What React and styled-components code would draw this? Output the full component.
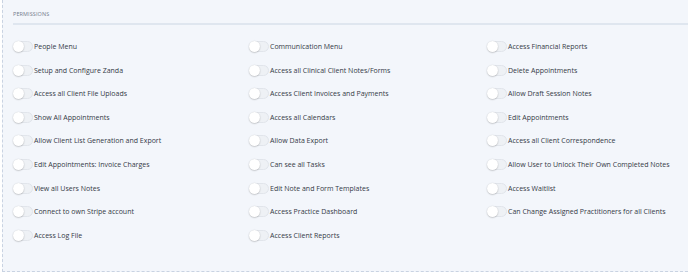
import React from "react";
import styled, { createGlobalStyle } from "styled-components";

const GlobalStyle = createGlobalStyle`
  html, body {
    margin: 0;
    padding: 0;
    background: #ffffff;
  }
  body {
    font-family: "Open Sans", "Liberation Sans", sans-serif;
  }
`;

const permissions = [
  ["People Menu", "Communication Menu", "Access Financial Reports"],
  ["Setup and Configure Zanda", "Access all Clinical Client Notes/Forms", "Delete Appointments"],
  ["Access all Client File Uploads", "Access Client Invoices and Payments", "Allow Draft Session Notes"],
  ["Show All Appointments", "Access all Calendars", "Edit Appointments"],
  ["Allow Client List Generation and Export", "Allow Data Export", "Access all Client Correspondence"],
  ["Edit Appointments: Invoice Charges", "Can see all Tasks", "Allow User to Unlock Their Own Completed Notes"],
  ["View all Users Notes", "Edit Note and Form Templates", "Access Waitlist"],
  ["Connect to own Stripe account", "Access Practice Dashboard", "Can Change Assigned Practitioners for all Clients"],
  ["Access Log File", "Access Client Reports", null],
];

const Panel = styled.section`
  margin-left: 2px;
  height: 272px;
  box-sizing: border-box;
  background: #f3f6fb;
  border-left: 1px dashed #c9d3e2;
  border-bottom: 1px dashed #c9d3e2;
  padding: 10px 0 0 10px;
  overflow: hidden;
`;

const Heading = styled.h3`
  margin: 0;
  font-size: 5.5px;
  font-weight: 400;
  letter-spacing: 0.1px;
  text-transform: uppercase;
  color: #737c8c;
  padding-bottom: 5px;
  border-bottom: 2px solid #dfe6ef;
`;

const Grid = styled.div`
  display: grid;
  grid-template-columns: 236px 238px 1fr;
  grid-auto-rows: 23.55px;
  margin-top: 10px;
`;

const Item = styled.label`
  display: flex;
  align-items: center;
  gap: 1px;
  font-size: 7px;
  color: #343a46;
  white-space: nowrap;
`;

const Track = styled.span`
  position: relative;
  flex: none;
  width: 20px;
  height: 11px;
  border-radius: 6px;
  background: #eef1f5;
  border: 1px solid #e1e5eb;
  box-sizing: border-box;
`;

const Knob = styled.span`
  position: absolute;
  left: -1px;
  top: -1px;
  width: 11px;
  height: 11px;
  border-radius: 50%;
  background: #ffffff;
  box-shadow: 0 0.5px 1.5px rgba(0, 0, 0, 0.3);
`;

const Toggle = () => (
  <Track>
    <Knob />
  </Track>
);

export default function App() {
  return (
    <>
      <GlobalStyle />
      <Panel>
        <Heading>Permissions</Heading>
        <Grid>
          {permissions.flat().map((label, i) =>
            label ? (
              <Item key={i}>
                <Toggle />
                {label}
              </Item>
            ) : (
              <span key={i} />
            )
          )}
        </Grid>
      </Panel>
    </>
  );
}
